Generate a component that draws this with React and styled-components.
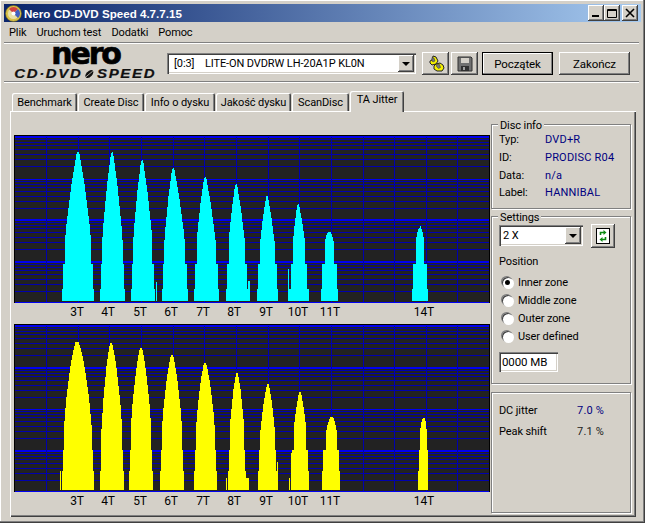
import React from "react";
import styled, { createGlobalStyle } from "styled-components";

const Global = createGlobalStyle`
  html, body { margin: 0; padding: 0; background: #d4d0c8; overflow: hidden; }
  * { box-sizing: border-box; }
`;

const raised = `box-shadow: inset -1px -1px 0 #404040, inset 1px 1px 0 #fff, inset -2px -2px 0 #808080;`;
const sunken = `box-shadow: inset 1px 1px 0 #808080, inset 2px 2px 0 #404040, inset -1px -1px 0 #fff, inset -2px -2px 0 #d4d0c8;`;

const Win = styled.div`
  width: 645px; height: 523px; padding: 4px 4px 6px; background: #d4d0c8;
  font-family: Roboto, "Liberation Sans", sans-serif; font-size: 11px; letter-spacing: -0.1px; color: #000;
  box-shadow: inset -1px -1px 0 #404040, inset -2px -2px 0 #808080, inset 1px 1px 0 #fff;
  display: flex; flex-direction: column;
`;
const TitleBar = styled.div`
  height: 18px; flex: none; display: flex; align-items: center; padding: 0 3px 0 1px;
  background: linear-gradient(90deg, #0a246a, #a6caf0);
`;
const TitleText = styled.span`
  margin-left: 2px; color: #fff; font: bold 11.6px "Liberation Sans", sans-serif; letter-spacing: 0; flex: 1; white-space: nowrap;
`;
const WinBtn = styled.div`
  width: 16px; height: 16px; margin-left: ${p => p.$gap}px; background: #d4d0c8; ${raised}
  display: flex; align-items: center; justify-content: center;
`;
const Menu = styled.div`
  height: 20px; margin-top: 1px; flex: none; display: flex; align-items: center; padding-left: 5px; gap: 10px;
  border-bottom: 1px solid #808080; box-shadow: 0 1px 0 #fff; margin-right: 2px;
`;
const Toolbar = styled.div`
  height: 38px; flex: none; display: flex; align-items: flex-start; margin-top: 1px; margin-right: 2px;
  border-bottom: 1px solid #808080; box-shadow: 0 1px 0 #fff;
`;
const Logo = styled.div`
  width: 163px; height: 36px; flex: none; display: flex; flex-direction: column; align-items: center; padding-left: 6px;
`;
const Nero = styled.div`
  font: bold 30px/18px "DejaVu Sans", sans-serif; letter-spacing: -2.1px; height: 21px; color: #000; padding-right: 6px;
  -webkit-text-stroke: 0.7px #000; margin-top: 1px;
`;
const Speed = styled.div`
  display: flex; align-items: center; justify-content: center; height: 13px; margin-top: 2px; white-space: nowrap; margin-left: -7px;
  font: italic bold 12.5px "Liberation Sans", sans-serif; letter-spacing: 1.4px; color: #111;
  transform: scaleX(1.2); -webkit-text-stroke: 0.2px #111;
`;
const Combo = styled.div`
  height: ${p => p.$h}px; width: ${p => p.$w}px; flex: none; background: #fff; ${sunken}
  display: flex; align-items: center; justify-content: space-between; padding: 2px 2px 2px ${p => p.$pad}px; white-space: pre;
`;
const ComboArrow = styled.div`
  width: 16px; align-self: stretch; background: #d4d0c8; ${raised}
  display: flex; align-items: center; justify-content: center;
  &::after { content: ""; border: 4px solid transparent; border-top: 4px solid #000; border-bottom: 0; }
`;
const DriveCombo = styled(Combo)` margin-top: 9px; `;
const IconBtn = styled.div`
  width: ${p => p.$w}px; height: 23px; margin-top: 8px; margin-left: ${p => p.$gap}px; flex: none; ${raised}
  display: flex; align-items: center; justify-content: center;
`;
const Btn = styled.div`
  width: 71px; height: 23px; margin-top: 8px; margin-left: ${p => p.$gap}px; flex: none; ${raised}
  display: flex; align-items: center; justify-content: center; font-size: 11.5px;
  ${p => p.$def && `outline: 1px solid #000; outline-offset: -1px; box-shadow: inset -2px -2px 0 #808080, inset 2px 2px 0 #fff;`}
`;
const TabRow = styled.div`
  display: flex; align-items: flex-end; height: 21px; flex: none; margin-top: 8px; margin-left: 8px; position: relative; z-index: 1;
`;
const Tab = styled.div`
  width: ${p => p.$w}px; height: ${p => (p.$on ? 21 : 18)}px; margin-right: ${p => (p.$on ? 0 : 1)}px; padding-top: 1px;
  display: flex; align-items: center; justify-content: center; white-space: nowrap;
  background: #d4d0c8; border-radius: 2px 2px 0 0;
  box-shadow: inset 1px 1px 0 #fff, inset -1px 0 0 #404040, inset -2px 0 0 #808080;
  ${p => p.$on && `margin-bottom: -1px; padding-bottom: 5px;`}
`;
const Panel = styled.div`
  flex: 1; margin: 0 5px 0 6px; min-height: 0; display: flex; align-items: flex-start; padding: 13px 0 0 4px;
  box-shadow: inset 1px 1px 0 #fff, inset -1px -1px 0 #404040, inset -2px -2px 0 #808080;
`;
const Charts = styled.div`
  width: 476px; margin-top: 11px; margin-right: 1px; flex: none;
`;
const ChartSvg = styled.svg` display: block; `;
const Side = styled.div`
  width: 140px; flex: none; display: flex; flex-direction: column;
`;
const Group = styled.div`
  height: ${p => p.$h}px; margin-bottom: ${p => p.$mb}px; position: relative; flex: none;
  border: 1px solid #808080; box-shadow: inset 1px 1px 0 #fff, 1px 1px 0 #fff;
  padding: ${p => p.$pt}px 0 0 7px;
`;
const Legend = styled.span`
  position: absolute; top: -5px; left: 6px; padding: 0 2px; background: #d4d0c8; line-height: 12px;
`;
const Row = styled.div`
  display: grid; grid-template-columns: ${p => p.$col}px 1fr; height: ${p => p.$h}px; align-items: center;
`;
const Val = styled.span` color: ${p => p.$c || "#000080"}; letter-spacing: 0.2px; `;
const SettingsTop = styled.div`
  display: flex; align-items: flex-start;
`;
const Refresh = styled.div`
  width: 24px; height: 24px; margin: -1px 0 0 8px; ${raised} display: flex; align-items: center; justify-content: center;
`;
const PosLabel = styled.div` margin-top: 7px; height: 14px; line-height: 14px; `;
const Radios = styled.div` margin-top: 4px; display: flex; flex-direction: column; `;
const RadioRow = styled.div` height: 18px; display: flex; align-items: center; gap: 5px; padding-left: 3px; `;
const Dot = styled.div`
  width: 11px; height: 11px; border-radius: 50%; background: #fff; flex: none; position: relative;
  box-shadow: inset 1px 1px 0 #404040, -1px -1px 0 #808080, 1px 1px 0 #fff;
  ${p => p.$on && `&::after { content: ""; position: absolute; left: 3px; top: 3px; width: 5px; height: 5px; border-radius: 50%; background: #000; }`}
`;
const MbInput = styled.div`
  width: 59px; height: 20px; margin-top: 7px; background: #fff; ${sunken}
  display: flex; align-items: center; padding-left: 3px; font-size: 11.5px;
`;

/* chart */
const X0 = 14, Y0 = 135;
const grid = [137, 179, 220, 262, 302];
const offsets = [2, 5, 8, 12, 17, 22, 29];
const minor = [];
for (let d = 0; d < 4; d++) offsets.forEach(o => minor.push(grid[d] + o));
const vert = Array.from({ length: 14 }, (_, k) => Math.round(46 + 31.65 * k));

const curve = [[0, 0], [0.02, 0.1], [0.24, 0.41], [0.53, 0.72], [0.82, 0.94], [1, 1]];
function shape(t) {
  const c = Math.max(0, Math.min(1, t));
  for (let i = 1; i < curve.length; i++) {
    if (c <= curve[i][0]) {
      const [a, b] = curve[i - 1], [x, y] = curve[i];
      return b + ((c - a) / (x - a)) * (y - b);
    }
  }
  return 1;
}

function peakPath(p, base, l1, l2, l3, dy) {
  let d = "";
  const span = l1 - p.py;
  const g = p.g || 1;
  for (let y = p.py; y < base; y++) {
    let t;
    if (y >= l1) t = 1;
    else if (y >= l2) t = (l2 - p.py) / span;
    else if (y >= l3) t = (l3 - p.py) / span;
    else t = (y + 1 - p.py) / span;
    const f = shape(Math.pow(t, g));
    const a = Math.round(p.cx - (p.cx - p.l) * f), b = Math.max(a + 1, Math.round(p.cx + (p.r - p.cx) * f));
    d += `M${a - X0} ${y - dy}h${b - a}v1h${a - b}z`;
  }
  return d;
}

const topPeaks = [
  { l: 62, r: 94, cx: 78, py: 152 }, { l: 100, r: 125, cx: 112, py: 152 }, { l: 131, r: 155, cx: 142, py: 160 },
  { l: 162, r: 188, cx: 173, py: 168 }, { l: 194, r: 219, cx: 205, py: 177 }, { l: 226, r: 248, cx: 236, py: 184 },
  { l: 257, r: 278, cx: 267, py: 196 }, { l: 290, r: 309, cx: 298, py: 204 }, { l: 321, r: 338, cx: 329, py: 232, g: 0.64 },
  { l: 412, r: 428, cx: 420, py: 228, g: 0.7 },
];
const topSpikes = [[156, 282, 1, 19], [288, 269, 1, 32], [289, 289, 1, 12], [248, 281, 2, 20], [420, 226, 1, 3]];
const botPeaks = [
  { l: 62, r: 94, cx: 77, py: 342, g: 0.8 }, { l: 100, r: 124, cx: 111, py: 343, g: 0.85 }, { l: 129, r: 153, cx: 141, py: 348, g: 0.85 },
  { l: 160, r: 184, cx: 172, py: 355, g: 0.85 }, { l: 194, r: 217, cx: 205, py: 363, g: 0.85 }, { l: 228, r: 246, cx: 237, py: 373, g: 0.85 },
  { l: 258, r: 277, cx: 268, py: 384, g: 0.9 }, { l: 291, r: 309, cx: 300, py: 392, g: 0.9 }, { l: 322, r: 340, cx: 332, py: 417, g: 0.7 },
  { l: 418, r: 428, cx: 424, py: 418, g: 0.55 },
];
const botSpikes = [[60, 471, 1, 19], [226, 478, 1, 12], [246, 478, 3, 12], [277, 462, 1, 28], [289, 478, 1, 12], [291, 453, 1, 37]];
const labels = [["3T", 77], ["4T", 108], ["5T", 140], ["6T", 171], ["7T", 203], ["8T", 234], ["9T", 266], ["10T", 298], ["11T", 330], ["14T", 424]];

function Chart({ color, peaks, spikes, base, lv, dy, height, thick }) {
  return (
    <ChartSvg width="476" height={height} shapeRendering="crispEdges">
      <rect x="0" y="0" width="476" height="168" fill="#000" />
      <rect x="1" y="1" width="474" height="166" fill="#222" />
      {minor.map(y => <rect key={y} x="1" y={y - Y0} width="474" height="1" fill="#0000b0" />)}
      {grid.map(y => {
        const on = thick.includes(y);
        return <rect key={y} x="1" y={y - Y0 - (on ? 1 : 0)} width="474" height={on ? 2 : 1} fill="#0000f0" />;
      })}
      {vert.map(x => <rect key={x} x={x - X0} y="2" width="1" height="165" fill="#0000b0" />)}
      {peaks.map((p, i) => <path key={i} d={peakPath(p, base, lv[0], lv[1], lv[2], dy)} fill={color} />)}
      {spikes.map((s, i) => <rect key={i} x={s[0] - X0} y={s[1] - dy} width={s[2]} height={s[3]} fill={color} />)}
      {labels.map(([t, x]) => (
        <text key={t} x={x - X0} y="181" textAnchor="middle" fontFamily="Roboto, sans-serif" fontSize="12" fill="#000" shapeRendering="auto">{t}</text>
      ))}
    </ChartSvg>
  );
}

const DiscIcon = () => (
  <svg width="17" height="17" viewBox="0 0 17 17"><circle cx="8.5" cy="8.5" r="8" fill="#d8c24a" stroke="#6b5a10" strokeWidth=".6" /><circle cx="8.5" cy="8.5" r="5.5" fill="#e8e0a8" /><path d="M8.5 8.5 L4 4 A6 6 0 0 1 13 4z" fill="#d04040" /><path d="M8.5 8.5 L13 4 A6 6 0 0 1 13 13z" fill="#4060c0" /><circle cx="8.5" cy="8.5" r="2" fill="#fff" /></svg>
);
const ChainIcon = () => (
  <svg width="18" height="17" viewBox="0 0 18 17"><path d="M3 6l2-1 1-4 3 1 2 4-2 3-4 1-2-2z" fill="#f4f000" stroke="#222" /><path d="M5 2.5l2 .5 1 3-2 1-1-1z" fill="#777" stroke="#333" strokeWidth=".5" /><path d="M7 11l2-2 4-1 3 2 1 3-2 3-5 0-3-2z" fill="#f4f000" stroke="#222" /><path d="M9.5 9.5l3 0 1 3-2 1-2-2z" fill="#777" stroke="#333" strokeWidth=".5" /></svg>
);
const FloppyIcon = () => (
  <svg width="16" height="16" viewBox="0 0 16 16"><path d="M1 1h13l1 1v13H1z" fill="#707070" stroke="#303030" /><rect x="4" y="2" width="8" height="5" fill="#d4d0c8" /><rect x="4" y="10" width="8" height="5" fill="#303030" /><rect x="6" y="11" width="2" height="3" fill="#a0a0a0" /></svg>
);
const RefreshIcon = () => (
  <svg width="14" height="16" viewBox="0 0 14 16"><rect x=".5" y=".5" width="13" height="15" fill="#fff" stroke="#000" /><path d="M4.5 7V4.5H8" fill="none" stroke="#0a8a10" strokeWidth="1.6" /><path d="M7.5 2l3 2.5-3 2.5z" fill="#0a8a10" /><path d="M9.5 9v2.5H6" fill="none" stroke="#0a8a10" strokeWidth="1.6" /><path d="M6.5 9l-3 2.5 3 2.5z" fill="#0a8a10" /></svg>
);

export default function App() {
  return (
    <>
      <Global />
      <Win>
        <TitleBar>
          <DiscIcon />
          <TitleText>Nero CD-DVD Speed 4.7.7.15</TitleText>
          <WinBtn $gap={0}><svg width="10" height="10"><rect x="1" y="7" width="7" height="2" fill="#000" /></svg></WinBtn>
          <WinBtn $gap={0}><svg width="12" height="11"><path d="M1.5 1.5h9v8h-9zM1 2.5h10" fill="none" stroke="#000" /></svg></WinBtn>
          <WinBtn $gap={2}><svg width="10" height="10"><path d="M1 1l8 8M9 1l-8 8" stroke="#000" strokeWidth="1.6" /></svg></WinBtn>
        </TitleBar>
        <Menu>
          <span>Plik</span><span>Uruchom test</span><span>Dodatki</span><span>Pomoc</span>
        </Menu>
        <Toolbar>
          <Logo>
            <Nero>nero</Nero>
            <Speed>
              CD·DVD
              <svg width="12" height="12" viewBox="0 0 17 12"><ellipse cx="8" cy="6" rx="3.6" ry="6.4" transform="rotate(35 8 6)" fill="#111" /><path d="M4 10L12 2" stroke="#d4d0c8" /></svg>
              SPEED
            </Speed>
          </Logo>
          <DriveCombo $w={249} $h={21} $pad={7}>
            <span>{"[0:3]    LITE-ON DVDRW LH-20A1P KL0N"}</span>
            <ComboArrow />
          </DriveCombo>
          <IconBtn $w={27} $gap={6}><ChainIcon /></IconBtn>
          <IconBtn $w={27} $gap={2}><FloppyIcon /></IconBtn>
          <Btn $def $gap={4}>Początek</Btn>
          <Btn $gap={6}>Zakończ</Btn>
        </Toolbar>
        <TabRow>
          <Tab $w={65}>Benchmark</Tab>
          <Tab $w={66}>Create Disc</Tab>
          <Tab $w={70}>Info o dysku</Tab>
          <Tab $w={75}>Jakość dysku</Tab>
          <Tab $w={57}>ScanDisc</Tab>
          <Tab $w={54} $on>TA Jitter</Tab>
        </TabRow>
        <Panel>
          <Charts>
            <Chart color="#00ffff" peaks={topPeaks} spikes={topSpikes} base={301} lv={[289, 264, 242]} dy={135} height={189} thick={[137, 220, 262]} />
            <Chart color="#ffff00" peaks={botPeaks} spikes={botSpikes} base={490} lv={[471, 450, 431]} dy={324} height={189} thick={[137, 179, 262]} />
          </Charts>
          <Side>
            <Group $h={85} $mb={7} $pt={6}>
              <Legend>Disc info</Legend>
              <Row $col={46} $h={17.7}><span>Typ:</span><Val>DVD+R</Val></Row>
              <Row $col={46} $h={17.7}><span>ID:</span><Val>PRODISC R04</Val></Row>
              <Row $col={46} $h={17.7}><span>Data:</span><Val>n/a</Val></Row>
              <Row $col={46} $h={17.7}><span>Label:</span><Val>HANNIBAL</Val></Row>
            </Group>
            <Group $h={168} $mb={8} $pt={8}>
              <Legend>Settings</Legend>
              <SettingsTop>
                <Combo $w={84} $h={21} $pad={4}>
                  <span>2 X</span>
                  <ComboArrow />
                </Combo>
                <Refresh><RefreshIcon /></Refresh>
              </SettingsTop>
              <PosLabel>Position</PosLabel>
              <Radios>
                <RadioRow><Dot $on /><span>Inner zone</span></RadioRow>
                <RadioRow><Dot /><span>Middle zone</span></RadioRow>
                <RadioRow><Dot /><span>Outer zone</span></RadioRow>
                <RadioRow><Dot /><span>User defined</span></RadioRow>
              </Radios>
              <MbInput>0000 MB</MbInput>
            </Group>
            <Group $h={121} $mb={0} $pt={7}>
              <Row $col={78} $h={21}><span>DC jitter</span><Val>7.0 %</Val></Row>
              <Row $col={78} $h={21}><span>Peak shift</span><Val $c="#202020">7.1 %</Val></Row>
            </Group>
          </Side>
        </Panel>
      </Win>
    </>
  );
}
